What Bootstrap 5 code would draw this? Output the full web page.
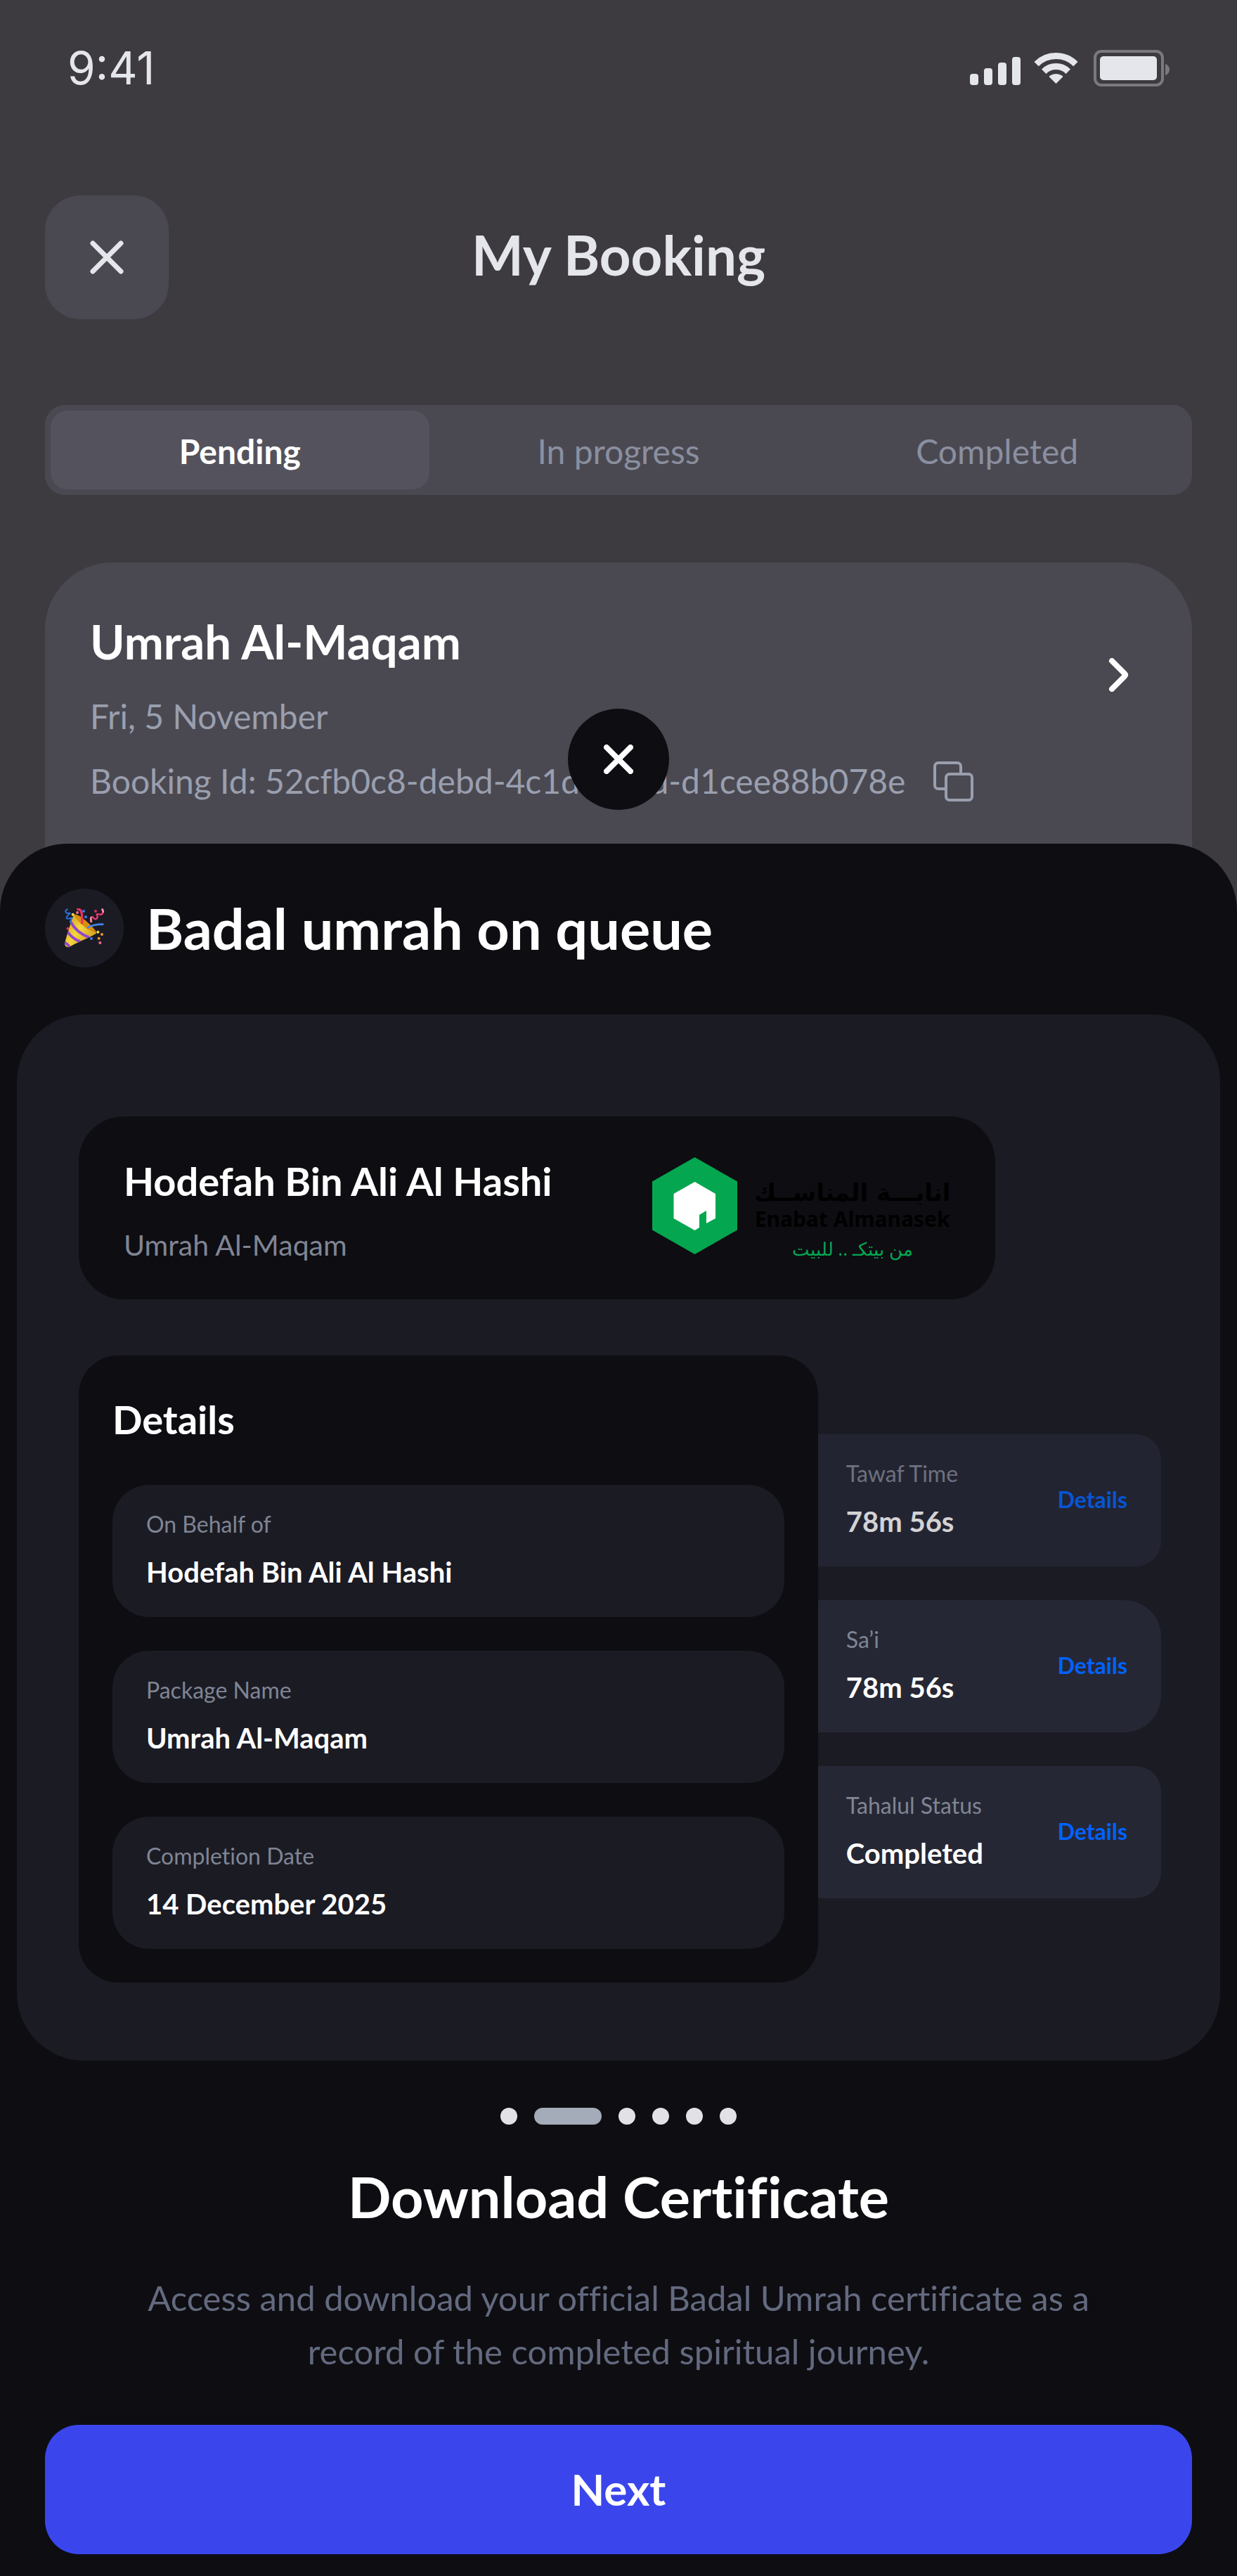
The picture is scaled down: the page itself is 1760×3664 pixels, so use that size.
<!DOCTYPE html>
<html lang="en">
<head>
<meta charset="utf-8">
<meta name="viewport" content="width=device-width, initial-scale=1">
<title>My Booking</title>
<link href="https://cdn.jsdelivr.net/npm/bootstrap@5.3.0/dist/css/bootstrap.min.css" rel="stylesheet">
<style>
  body { background: #0e0d12; color: #fff; font-family: Lato, "Open Sans", sans-serif; font-size: 48px; line-height: 64px; font-variant-ligatures: no-common-ligatures; }
  h1, h2, h3, p { margin: 0; }
  svg { display: block; flex: none; }
  button { font-family: inherit; }

  .backdrop-screen { background: #3d3b40; padding: 57px 64px 0; }
  .status-row { padding: 0 32px; color: #e5e6eb; font: 400 64px/80px Inter, sans-serif; }
  .top-row { margin-top: 141px; color: #e5e6eb; }
  .top-side { flex: 1 1 0; }
  .close-tile { width: 176px; height: 176px; border-radius: 50px; background: #4a4952; color: #e5e6eb; }
  .display-title { font-size: 81px; line-height: 96px; font-weight: 700; }
  .top-row .display-title { padding-bottom: 8px; font-size: 78px; }

  .tab-strip { margin-top: 122px; padding: 8px; border-radius: 28px; background: #4a4952; }
  .tab-strip .nav-link { flex: 1 1 0; padding: 26px 0 22px; border-radius: 24px; color: #8a8f9f; }
  .tab-strip .nav-link.active { background: #54535d; color: #fff; font-weight: 700; }

  .booking-card { margin-top: 96px; padding: 72px 88px 153px 64px; border-radius: 96px 96px 0 0; background: #4a4952; }
  .booking-name { font-size: 67px; line-height: 80px; font-weight: 700; }
  .booking-meta { color: #9a9fae; }
  .booking-date { margin-top: 35px; }
  .booking-id { margin-top: 28px; gap: 40px; }
  .chevron-link { margin-top: 64px; color: #fff; }

  .sheet { margin-top: -96px; border-radius: 96px 96px 0 0; background: #0e0d12; padding: 64px 64px 31px; }
  .sheet-close { top: -192px; width: 144px; height: 144px; background: #0e0d12; color: #fff; }
  .sheet-head { gap: 32px; }
  .emoji-disc { width: 112px; height: 112px; background: #1b1b24; }

  .preview { margin: 67px -40px 0; padding: 145px 84px 111px 88px; border-radius: 96px; background: #1b1b24; }
  .name-card { width: 84.7%; padding: 60px 64px 52px; border-radius: 64px; background: #0e0d12; }
  .section-title { font-size: 56px; line-height: 64px; font-weight: 700; }
  .name-card .sub { margin-top: 35px; font-size: 41px; line-height: 48px; color: #7f8594; }
  .brand { gap: 24px; margin-top: -2px; }
  .brand-words { padding-top: 30px; text-align: center; }
  .brand-ar { font: 700 34px/40px "DejaVu Sans", sans-serif; color: #000; }
  .brand-en { font: 700 30px/36px "Noto Sans", sans-serif; color: #000; }
  .brand-tag { margin-top: 4px; font: 400 26px/40px "Noto Sans", sans-serif; color: #04a650; }

  .columns-row { margin-top: 80px; }
  .details-card { flex: 0 0 68.3%; padding: 59px 48px 48px; border-radius: 56px; background: #0e0d12; }
  .details-card .section-title { margin-bottom: 61px; }
  .stack { gap: 48px; }
  .info-tile { padding: 36px 48px 40px; border-radius: 52px; background: #1b1b24; }
  .info-label { font-size: 32px; line-height: 40px; color: #7f8594; }
  .info-value { margin-top: 24px; font-size: 40px; line-height: 48px; font-weight: 700; }
  .side-stack { flex: 1 1 0; padding-top: 112px; }
  .side-tile { padding-left: 40px; border-radius: 0 36px 36px 0; background: #262734; }
  .side-tile.round-more { border-radius: 0 52px 52px 0; }
  .side-tile.dimmed { background: #232431; }
  .side-tile.dimmed > * { opacity: .8; }
  .side-tile a { padding-top: 2px; font-size: 32px; line-height: 40px; font-weight: 700; color: #0062ff; text-decoration: none; }

  .pager { margin-top: 67px; gap: 24px; }
  .pager button { width: 24px; height: 24px; padding: 0; border: 0; border-radius: 12px; background: #e1e1e6; }
  .pager button.current { width: 96px; background: #a4abb9; }
  .sheet-title { margin-top: 54px; text-align: center; }
  .sheet-text { margin-top: 58px; padding: 0 128px; text-align: center; font-size: 49px; line-height: 76px; color: #636a7f; }
  .next-btn { margin-top: 67px; padding: 51px 0 53px; border: 0; border-radius: 48px; background: #3a46ec; color: #fff; font-size: 62px; line-height: 80px; font-weight: 700; }
  .next-btn:hover { background: #3a46ec; color: #fff; }
</style>
</head>
<body>
<div class="backdrop-screen">
  <div class="status-row d-flex justify-content-between align-items-center">
    <span>9:41</span>
    <svg width="284" height="52" viewBox="0 0 284 52" fill="#e5e6eb" aria-hidden="true">
      <rect x="0" y="34" width="12" height="16" rx="4"/>
      <rect x="20" y="26" width="12" height="24" rx="4"/>
      <rect x="40" y="18" width="12" height="32" rx="4"/>
      <rect x="60" y="10" width="12" height="40" rx="4"/>
      <path d="M94.6 20.1A39.5 39.5 0 0 1 150.4 20.1M105.2 30.7A24.5 24.5 0 0 1 139.8 30.7" fill="none" stroke="#e5e6eb" stroke-width="9"/>
      <path d="M122.500 48L113 38.500Q112.500 37.500 113.500 36.800Q122.500 31.200 131.500 36.800Q132.500 37.500 132 38.500Z"/>
      <rect x="178" y="2" width="96" height="48" rx="9" fill="none" stroke="#7a797e" stroke-width="4"/>
      <rect x="185" y="9" width="81" height="34" rx="5"/>
      <path d="M278 20C282 21 284 25 284 28S282 35 278 36Z" fill="#7a797e"/>
    </svg>
  </div>

  <header class="top-row d-flex align-items-center">
    <div class="top-side">
      <button type="button" class="btn close-tile border-0 p-0 d-flex align-items-center justify-content-center" aria-label="Close">
        <svg width="48" height="48" viewBox="0 0 48 48" fill="none" stroke="currentColor" stroke-width="7" stroke-linecap="round"><path d="M4 4L44 44M44 4L4 44"/></svg>
      </button>
    </div>
    <h1 class="display-title">My Booking</h1>
    <div class="top-side"></div>
  </header>

  <nav class="tab-strip nav nav-pills flex-nowrap text-center">
    <a class="nav-link active" aria-current="page" href="#pending">Pending</a>
    <a class="nav-link" href="#progress">In progress</a>
    <a class="nav-link" href="#completed">Completed</a>
  </nav>

  <section class="booking-card d-flex justify-content-between align-items-start">
    <div>
      <h2 class="booking-name">Umrah Al-Maqam</h2>
      <p class="booking-meta booking-date">Fri, 5 November</p>
      <div class="booking-meta booking-id d-flex align-items-center">
        <span>Booking Id: 52cfb0c8-debd-4c1d-bd9d-d1cee88b078e</span>
        <button type="button" class="btn border-0 p-0" aria-label="Copy booking id">
          <svg width="57" height="57" viewBox="0 0 57 57" fill="none" stroke="#9a9fae" stroke-width="4"><path d="M18 39H7a5 5 0 0 1-5-5V7a5 5 0 0 1 5-5H34a5 5 0 0 1 5 5V18"/><rect x="18" y="18" width="37" height="37" rx="5"/></svg>
        </button>
      </div>
    </div>
    <a href="#booking" class="chevron-link" aria-label="Open booking">
      <svg width="32" height="48" viewBox="0 0 32 48" fill="none" stroke="currentColor" stroke-width="8" stroke-linecap="round"><path d="M6 4L24 22Q26 24 24 26L6 44"/></svg>
    </a>
  </section>
</div>

<main class="sheet position-relative">
  <button type="button" class="btn sheet-close border-0 p-0 rounded-circle position-absolute start-50 translate-middle-x d-flex align-items-center justify-content-center" aria-label="Dismiss">
    <svg width="42" height="42" viewBox="0 0 42 42" fill="none" stroke="currentColor" stroke-width="8" stroke-linecap="round"><path d="M4 4L38 38M38 4L4 38"/></svg>
  </button>

  <div class="sheet-head d-flex align-items-center">
    <div class="emoji-disc rounded-circle d-flex align-items-center justify-content-center">
      <svg width="56" height="56" viewBox="0 0 168 168" aria-hidden="true">
        <defs>
          <linearGradient id="cone" x1="0" y1="0" x2="1" y2=".8"><stop offset="0" stop-color="#c8961e"/><stop offset=".5" stop-color="#f5d63c"/><stop offset="1" stop-color="#c9951f"/></linearGradient>
          <clipPath id="coneclip"><path d="M38 28C58 60 90 92 134 106C128 116 60 142 22 164C10 170-2 160 1 148C8 118 26 62 38 28Z"/></clipPath>
        </defs>
        <path d="M38 28C42 20 68 32 96 58C122 82 140 102 134 108C124 114 90 96 66 72C46 52 34 36 38 28Z" fill="#d98e12"/>
        <path d="M38 28C58 60 90 92 134 106C128 116 60 142 22 164C10 170-2 160 1 148C8 118 26 62 38 28Z" fill="url(#cone)"/>
        <g clip-path="url(#coneclip)" fill="none" stroke="#9345cf" stroke-width="12"><path d="M26 58C44 92 68 110 104 124M12 100C28 122 44 134 66 142M-2 144C8 150 16 156 24 168"/></g>
        <path d="M56 4C72 2 76 22 74 62" fill="none" stroke="#ee2f5f" stroke-width="10" stroke-linecap="round"/>
        <path d="M96 84C112 72 134 68 166 68" fill="none" stroke="#4286f0" stroke-width="8"/>
        <path d="M14 4C-4 8 4 24 20 20C32 18 4 34 8 42C14 50 34 34 30 44Q20 58 26 62" fill="none" stroke="#2b6fe0" stroke-width="6"/>
        <path d="M114 60C108 30 118 34 124 42C134 52 144 40 138 30C134 22 144 24 152 26C166 28 166 10 158 2" fill="none" stroke="#e83c6d" stroke-width="7"/>
        <path d="M114 60Q110 44 113 38M164 18Q166 8 158 2" fill="none" stroke="#ff8fb0" stroke-width="8"/>
        <g fill="#3a7df0"><circle cx="81" cy="12" r="6"/><circle cx="90" cy="37" r="6"/><circle cx="114" cy="129" r="6"/></g>
        <g fill="#f46a9d"><circle cx="54" cy="18" r="6"/><circle cx="13" cy="86" r="6" fill="#d6345c"/><circle cx="132" cy="12" r="6" fill="#d6345c"/><circle cx="151" cy="147" r="6"/></g>
        <g fill="#f2e03a"><circle cx="35" cy="26" r="6"/><circle cx="142" cy="101" r="6"/></g>
        <g fill="#ee9430"><circle cx="159" cy="111" r="6"/><circle cx="146" cy="128" r="6"/></g>
      </svg>
    </div>
    <h2 class="display-title">Badal umrah on queue</h2>
  </div>

  <section class="preview">
    <div class="name-card d-flex justify-content-between align-items-start">
      <div>
        <h3 class="section-title">Hodefah Bin Ali Al Hashi</h3>
        <p class="sub">Umrah Al-Maqam</p>
      </div>
      <div class="brand d-flex">
        <svg width="121" height="138" viewBox="0 0 121 138" aria-hidden="true"><path d="M60.500 0L121 34.500V103.500L60.500 138L0 103.500V34.500Z" fill="#04a650"/><path d="M60.500 35L90 52V87L77 94V76L67 82V100L60.500 104L30.500 87V52Z" fill="#fff"/></svg>
        <div class="brand-words">
          <div class="brand-ar" lang="ar" dir="rtl">انابـــة المناســك</div>
          <div class="brand-en">Enabat Almanasek</div>
          <div class="brand-tag" lang="ar" dir="rtl">من بيتكـ .. للبيت</div>
        </div>
      </div>
    </div>

    <div class="columns-row d-flex align-items-start">
      <div class="details-card">
        <h3 class="section-title">Details</h3>
        <div class="stack d-flex flex-column">
          <div class="info-tile"><div class="info-label">On Behalf of</div><div class="info-value">Hodefah Bin Ali Al Hashi</div></div>
          <div class="info-tile"><div class="info-label">Package Name</div><div class="info-value">Umrah Al-Maqam</div></div>
          <div class="info-tile"><div class="info-label">Completion Date</div><div class="info-value">14 December 2025</div></div>
        </div>
      </div>
      <div class="side-stack stack d-flex flex-column">
        <div class="info-tile side-tile dimmed d-flex justify-content-between align-items-center">
          <div><div class="info-label">Tawaf Time</div><div class="info-value">78m 56s</div></div><a href="#tawaf">Details</a>
        </div>
        <div class="info-tile side-tile round-more d-flex justify-content-between align-items-center">
          <div><div class="info-label">Sa’i</div><div class="info-value">78m 56s</div></div><a href="#sai">Details</a>
        </div>
        <div class="info-tile side-tile d-flex justify-content-between align-items-center">
          <div><div class="info-label">Tahalul Status</div><div class="info-value">Completed</div></div><a href="#tahalul">Details</a>
        </div>
      </div>
    </div>
  </section>

  <div class="pager d-flex justify-content-center">
    <button type="button" aria-label="Slide 1"></button>
    <button type="button" class="current" aria-label="Slide 2" aria-current="true"></button>
    <button type="button" aria-label="Slide 3"></button>
    <button type="button" aria-label="Slide 4"></button>
    <button type="button" aria-label="Slide 5"></button>
    <button type="button" aria-label="Slide 6"></button>
  </div>
  <h2 class="display-title sheet-title">Download Certificate</h2>
  <p class="sheet-text">Access and download your official Badal Umrah certificate as a record of the completed spiritual journey.</p>
  <button type="button" class="btn next-btn w-100">Next</button>
</main>
<script src="https://cdn.jsdelivr.net/npm/bootstrap@5.3.0/dist/js/bootstrap.bundle.min.js"></script>
</body>
</html>
